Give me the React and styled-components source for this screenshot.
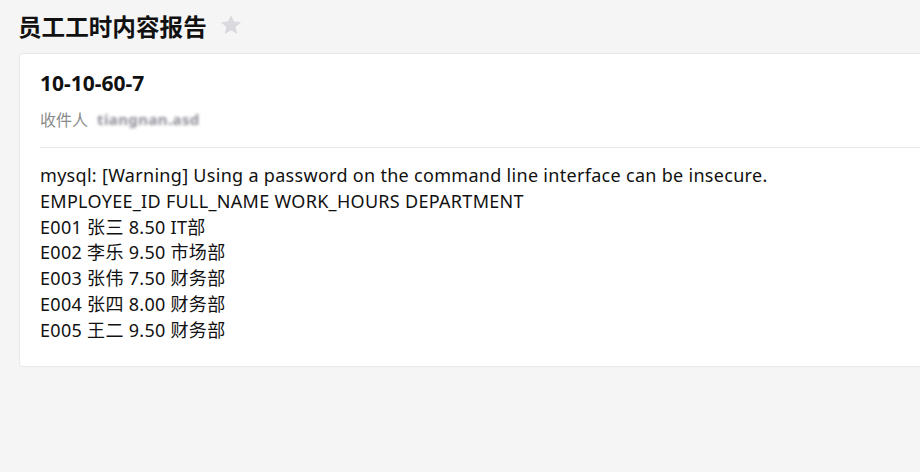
import React from "react";
import styled, { createGlobalStyle } from "styled-components";

const Global = createGlobalStyle`
  html, body { margin: 0; padding: 0; background: #f5f5f5; overflow: hidden; }
  body { font-family: "Noto Sans", "Noto Sans CJK SC", sans-serif; color: #111; }
`;

const Page = styled.div`
  width: 920px;
  height: 472px;
  background: #f5f5f5;
  overflow: hidden;
`;

const Header = styled.div`
  display: flex;
  align-items: center;
  gap: 12px;
  padding: 9px 0 0 18px;
  height: 34px;
`;

const Title = styled.h1`
  margin: 0;
  font-family: "Noto Sans CJK SC", sans-serif;
  font-size: 23.6px;
  line-height: 34px;
  font-weight: 700;
  color: #111;
`;

const Star = styled.svg`
  width: 24px;
  height: 24px;
  display: block;
  margin-top: -2px;
`;

const Card = styled.div`
  margin: 10px 0 0 19px;
  width: 960px;
  background: #fff;
  border: 1px solid #e8e8e8;
  border-radius: 4px;
`;

const MailHead = styled.div`
  margin-left: 20px;
  padding: 15px 0 16px;
  border-bottom: 1px solid #e8e8e8;
`;

const Subject = styled.div`
  font-family: "Noto Sans", "Noto Sans CJK SC", sans-serif;
  font-size: 21px;
  line-height: 28px;
  font-weight: 700;
  color: #111;
`;

const Recipient = styled.div`
  margin-top: 10px;
  display: flex;
  align-items: center;
  gap: 9px;
  font-family: "Noto Sans CJK SC", sans-serif;
  font-size: 16px;
  line-height: 24px;
  color: #8a8a8a;
`;

const Blurred = styled.span`
  font-family: "Noto Sans", sans-serif;
  font-size: 15px;
  font-weight: 700;
  color: #8e8e98;
  filter: blur(1.4px);
  letter-spacing: 0.4px;
`;

const Body = styled.div`
  padding: 15px 20px 22px;
  font-family: "Noto Sans", "Noto Sans CJK SC", sans-serif;
  font-size: 18px;
  letter-spacing: 0.3px;
  line-height: 25.8px;
  color: #111;
`;

const Line = styled.div`
  white-space: pre;
`;

const lines = [
  "mysql: [Warning] Using a password on the command line interface can be insecure.",
  "EMPLOYEE_ID FULL_NAME WORK_HOURS DEPARTMENT",
  "E001 张三 8.50 IT部",
  "E002 李乐 9.50 市场部",
  "E003 张伟 7.50 财务部",
  "E004 张四 8.00 财务部",
  "E005 王二 9.50 财务部",
];

export default function App() {
  return (
    <Page>
      <Global />
      <Header>
        <Title>员工工时内容报告</Title>
        <Star viewBox="0 0 24 24">
          <path
            d="M12 2l2.9 6.6 7.2.6-5.5 4.8 1.7 7.1L12 17.3l-6.3 3.8 1.7-7.1-5.5-4.8 7.2-.6z"
            fill="#d9d9de"
          />
        </Star>
      </Header>
      <Card>
        <MailHead>
          <Subject>10-10-60-7</Subject>
          <Recipient>
            收件人
            <Blurred>tiangnan.asd</Blurred>
          </Recipient>
        </MailHead>
        <Body>
          {lines.map((l, i) => (
            <Line key={i}>{l}</Line>
          ))}
        </Body>
      </Card>
    </Page>
  );
}
